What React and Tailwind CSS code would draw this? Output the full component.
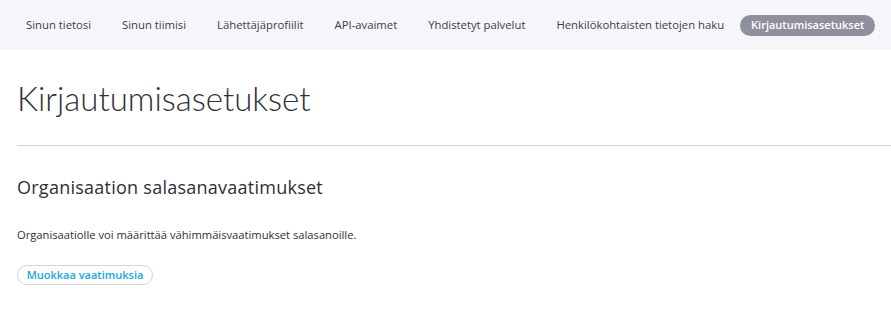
export default function App() {
  const items = [
    "Sinun tietosi",
    "Sinun tiimisi",
    "Lähettäjäprofiilit",
    "API-avaimet",
    "Yhdistetyt palvelut",
    "Henkilökohtaisten tietojen haku",
  ];
  return (
    <div className="w-[891px] h-[311px] bg-white overflow-hidden" style={{ fontFamily: "'Open Sans', sans-serif" }}>
      <nav className="h-[50px] bg-[#f5f6fa] flex items-center pl-[14px] gap-[7px] text-[11.3px] text-[#3d3d47]">
        {items.map((t) => (
          <span key={t} className="px-3 py-[3px] whitespace-nowrap">{t}</span>
        ))}
        <span className="ml-[-3px] px-[11px] h-[21px] flex items-center rounded-full bg-[#8f8f9d] text-white font-semibold text-[11px] whitespace-nowrap">
          Kirjautumisasetukset
        </span>
      </nav>
      <div className="pl-[17px]">
        <h1 className="pt-[28px] h-[95px] text-[33px] font-light text-[#2f2f35] leading-[40px]" style={{ fontFamily: "Lato, sans-serif" }}>
          Kirjautumisasetukset
        </h1>
        <div className="border-t border-[#d6d6d9]" />
        <h2 className="mt-[29px] text-[18px] text-[#2f2f35] leading-[24px] tracking-[0.25px]">
          Organisaation salasanavaatimukset
        </h2>
        <p className="mt-[28px] text-[11.2px] text-[#2f2f35] leading-[16px]">
          Organisaatiolle voi määrittää vähimmäisvaatimukset salasanoille.
        </p>
        <button className="mt-[22px] w-[136px] h-[20px] rounded-full border border-[#d4d4d8] text-[11px] font-semibold text-[#19a6e3] flex items-center justify-center">
          Muokkaa vaatimuksia
        </button>
      </div>
    </div>
  );
}
